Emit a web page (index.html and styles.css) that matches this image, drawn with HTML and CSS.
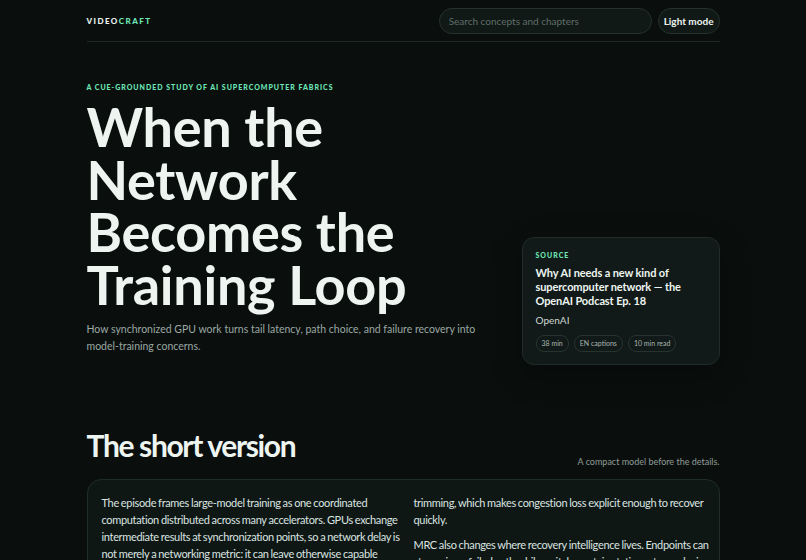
FILE: index.html
```html
<!DOCTYPE html>
<html lang="en">
<head>
    <meta charset="UTF-8">
    <meta name="viewport" content="width=device-width, initial-scale=1.0">
    <title>When the Network Becomes the Training Loop</title>
    <link rel="stylesheet" href="styles.css">
</head>
<body>
    <div class="page">
        <!-- Barra superior -->
        <header class="topbar">
            <div class="brand">VIDEO<span>CRAFT</span></div>
            <div class="tools">
                <input class="search" type="text" placeholder="Search concepts and chapters">
                <button class="theme-btn">Light mode</button>
            </div>
        </header>

        <!-- Portada -->
        <section class="hero">
            <div class="hero-text">
                <div class="eyebrow">A cue-grounded study of AI supercomputer fabrics</div>
                <h1>When the Network Becomes the Training Loop</h1>
                <p class="lede">How synchronized GPU work turns tail latency, path choice, and failure recovery into model-training concerns.</p>
            </div>
            <aside class="source-card">
                <div class="eyebrow">Source</div>
                <h3>Why AI needs a new kind of supercomputer network — the OpenAI Podcast Ep. 18</h3>
                <div class="author">OpenAI</div>
                <div class="chips">
                    <span class="chip">38 min</span>
                    <span class="chip">EN captions</span>
                    <span class="chip">10 min read</span>
                </div>
            </aside>
        </section>

        <!-- Resumen -->
        <section class="summary">
            <div class="section-head">
                <h2>The short version</h2>
                <span class="note">A compact model before the details.</span>
            </div>
            <div class="summary-box">
                <div class="col">
                    <p>The episode frames large-model training as one coordinated computation distributed across many accelerators. GPUs exchange intermediate results at synchronization points, so a network delay is not merely a networking metric: it can leave otherwise capable accelerators waiting on the slowest transfer. Multipath Reliable Connection spreads traffic across many paths and pairs it with packet</p>
                </div>
                <div class="col">
                    <p>trimming, which makes congestion loss explicit enough to recover quickly.</p>
                    <p>MRC also changes where recovery intelligence lives. Endpoints can stop using a failed path while switches retain static routes, reducing the work the fabric has to do during a failure.</p>
                </div>
            </div>
        </section>
    </div>
</body>
</html>
```

FILE: styles.css
```css
body {
    margin: 0;
    background-color: #0a0f0e;
    color: #eef5f1;
    font-family: 'Lato', sans-serif;
}

.page {
    width: 633px;
    margin: 0 auto;
}

/* Barra superior */
.topbar {
    display: flex;
    justify-content: space-between;
    align-items: center;
    height: 41px;
    border-bottom: 1px solid #1f2a27;
}

.brand {
    font-size: 8px;
    font-weight: 900;
    letter-spacing: 0.18em;
    color: #eef5f1;
}

.brand span {
    color: #6ee7b7;
}

.tools {
    display: flex;
    gap: 6px;
}

.search {
    width: 213px;
    height: 26px;
    box-sizing: border-box;
    padding: 0 9px;
    border-radius: 13px;
    border: 1px solid #24312d;
    background: #111917;
    color: #eef5f1;
    font-family: inherit;
    font-size: 10px;
}

.search::placeholder {
    color: #5f6d68;
}

.theme-btn {
    height: 26px;
    padding: 0 5px;
    border-radius: 13px;
    border: 1px solid #24312d;
    background: #111917;
    color: #eef5f1;
    font-family: inherit;
    font-size: 10px;
    font-weight: 700;
}

/* Portada */
.hero {
    display: grid;
    grid-template-columns: 1fr 198px;
    gap: 40px;
    align-items: end;
    padding-top: 41px;
}

.eyebrow {
    font-size: 7px;
    line-height: 9px;
    font-weight: 900;
    letter-spacing: 0.14em;
    text-transform: uppercase;
    color: #6ee7b7;
}

.hero h1 {
    margin: 9px 0 0;
    font-size: 54px;
    line-height: 52.5px;
    font-weight: 700;
    letter-spacing: -0.005em;
    color: #eef5f1;
}

.lede {
    margin: 10px 0 0;
    font-size: 10.5px;
    line-height: 17px;
    color: #9aa7a2;
    max-width: 400px;
}

.source-card {
    margin-bottom: -10px;
    padding: 13px 13px 12px;
    border: 1px solid #1f2c28;
    border-radius: 12px;
    background: #111a18;
    box-shadow: 0 10px 30px rgba(0, 0, 0, 0.35);
}

.source-card h3 {
    margin: 6px 0 0;
    font-size: 11px;
    line-height: 14px;
    font-weight: 700;
    letter-spacing: -0.01em;
}

.author {
    margin-top: 6px;
    font-size: 10px;
    color: #cfd8d4;
}

.chips {
    display: flex;
    gap: 5px;
    margin-top: 9px;
}

.chip {
    padding: 1px 5px;
    border: 1px solid #26332f;
    border-radius: 8px;
    font-size: 7px;
    line-height: 13px;
    color: #a9b5b0;
}

/* Resumen */
.summary {
    padding-top: 72px;
}

.section-head {
    display: flex;
    justify-content: space-between;
    align-items: flex-end;
}

.section-head h2 {
    margin: 0 0 4px;
    font-size: 30px;
    font-weight: 700;
    letter-spacing: -0.045em;
    line-height: 36px;
}

.note {
    font-size: 9px;
    color: #8f9b97;
}

.summary-box {
    display: grid;
    grid-template-columns: 300px 1fr;
    gap: 12px;
    margin-top: 12px;
    padding: 14px 8px 14px 14px;
    border: 1px solid #1f2c28;
    border-radius: 14px;
    background: #0f1715;
}

.summary-box p {
    margin: 0 0 8px;
    font-size: 11px;
    line-height: 17px;
    letter-spacing: -0.03em;
    word-spacing: -0.5px;
    color: #dbe4e0;
}
```
